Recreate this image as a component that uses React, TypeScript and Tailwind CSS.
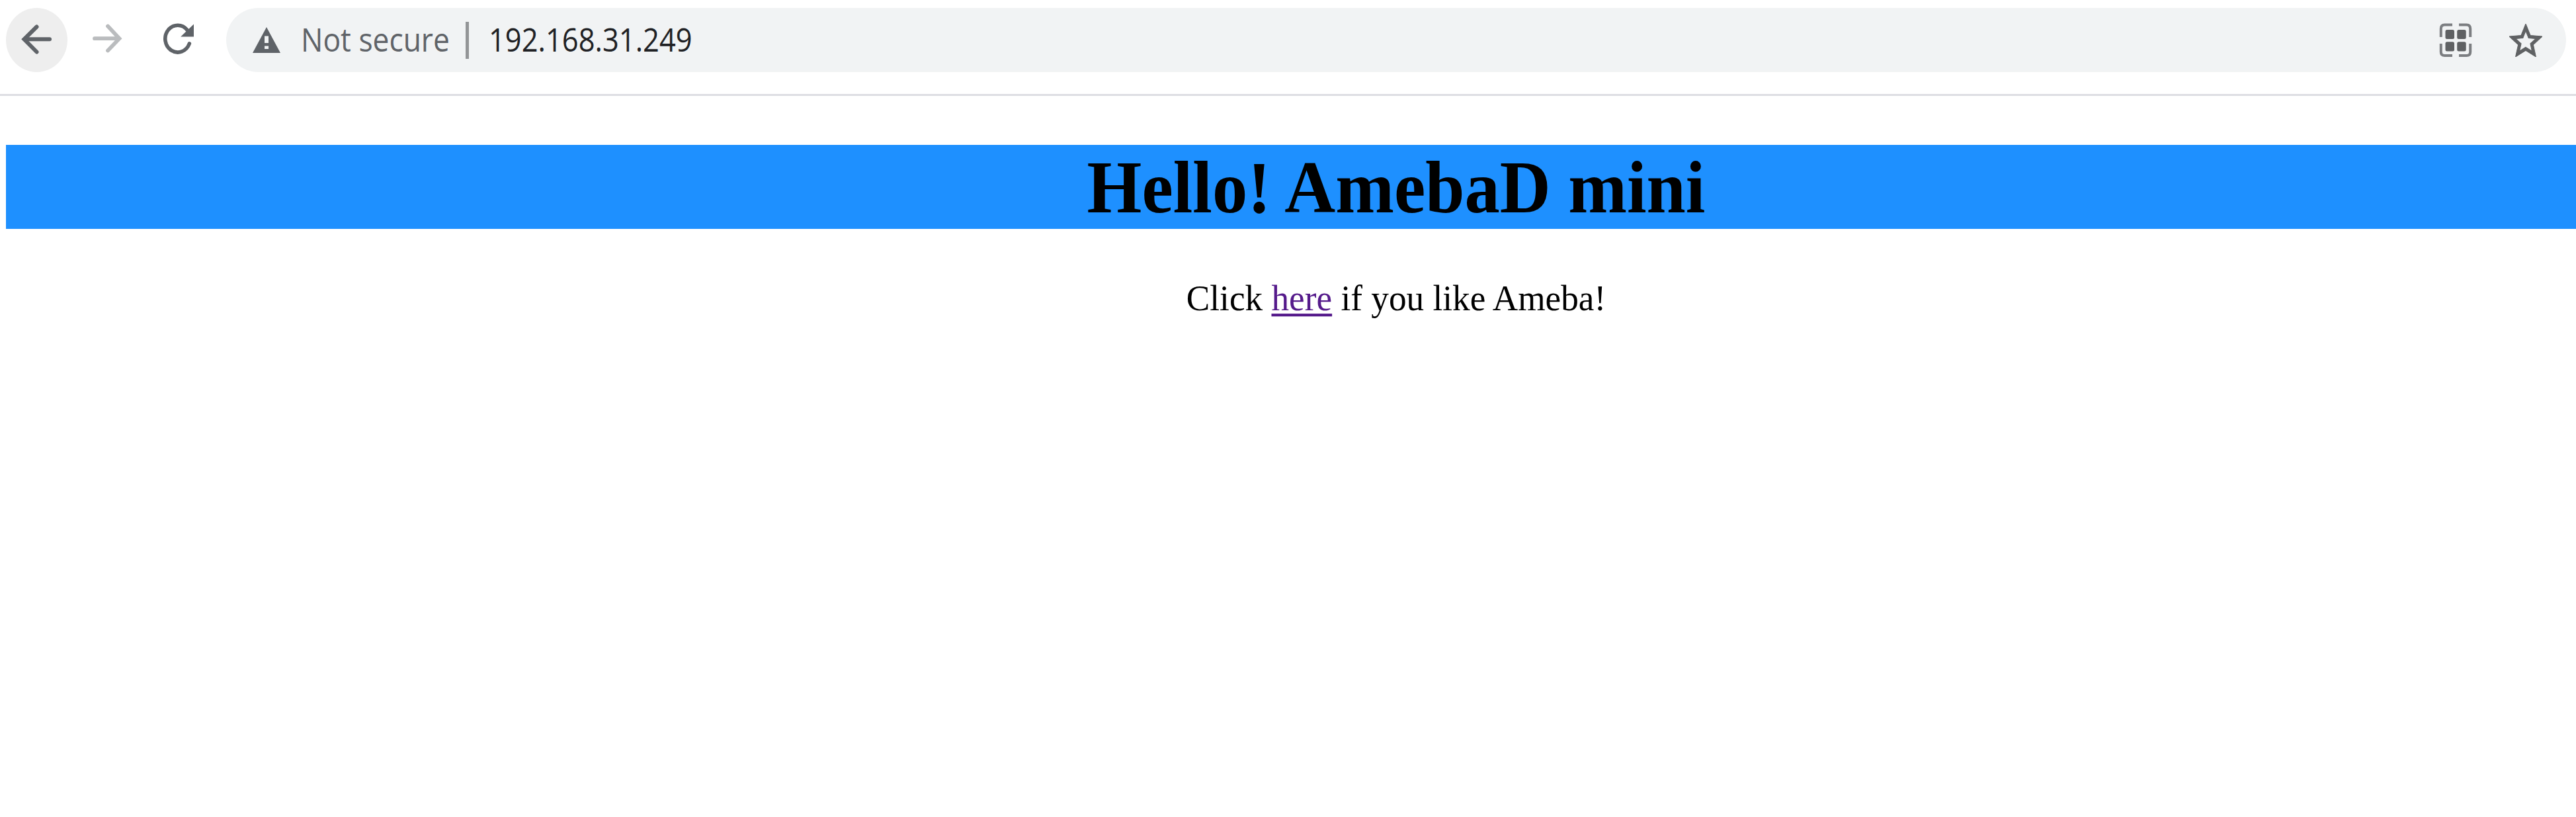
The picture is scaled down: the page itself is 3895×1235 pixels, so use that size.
function BackIcon() {
  return (
    <svg viewBox="0 0 93 97" className="h-[97px] w-[93px]" fill="none" stroke="#5f6368">
      <path d="M46.5 28.5 27.5 47.3 46.5 66.5" strokeWidth="6" strokeLinecap="round" />
      <path d="M28 47.3H66" strokeWidth="6" strokeLinecap="round" />
    </svg>
  );
}

function ForwardIcon() {
  return (
    <svg viewBox="0 0 50 50" className="h-[50px] w-[50px]" fill="none" stroke="#babcbe">
      <path d="M26 6.5 43.5 25.2 26 43.5M6 25.2H42.5" strokeWidth="5.8" strokeLinecap="round" />
    </svg>
  );
}

function ReloadIcon() {
  return (
    <svg viewBox="0 0 50 50" className="h-[50px] w-[50px]">
      <path
        d="M41.35 31.9A18.9 20.4 0 1 1 38.2 11.5"
        fill="none"
        stroke="#5f6368"
        strokeWidth="5.6"
        strokeLinecap="round"
      />
      <path d="M48 2.4V21.4H28.2Z" fill="#5f6368" />
    </svg>
  );
}

function WarningIcon() {
  return (
    <svg viewBox="0 0 42 39" className="h-[39px] w-[42px]">
      <path d="M21 0 42 39H0Z" fill="#5f6368" />
      <path d="M18 13.5h6V24h-6zM18 28.5h6V33h-6z" fill="#f1f3f4" />
    </svg>
  );
}

function GridIcon() {
  return (
    <svg viewBox="0 0 50 52" className="h-[52px] w-[50px]">
      <path
        d="M20 2.5H8.5Q2.8 2.5 2.8 8.5V21M30 2.5H41.5Q47.2 2.5 47.2 8.5V21M20 49H8.5Q2.8 49 2.8 43.5V31M30 49H41.5Q47.2 49 47.2 43.5V31"
        fill="none"
        stroke="#7c7e81"
        strokeWidth="4"
      />
      <g fill="#5f6163">
        <rect x="9.5" y="10" width="13.5" height="14" rx="2.5" />
        <rect x="27.2" y="10" width="13.5" height="14" rx="2.5" />
        <rect x="9.5" y="28.3" width="13.5" height="14.2" rx="2.5" />
        <rect x="27.2" y="28.3" width="13.5" height="14.2" rx="2.5" />
      </g>
    </svg>
  );
}

function StarIcon() {
  return (
    <svg viewBox="2 2 20 19" preserveAspectRatio="none" className="h-[50px] w-[50px]" fill="#5f6163">
      <path
        d="m22 9.24-7.19-.62L12 2 9.19 8.63 2 9.24l5.46 4.73L5.82 21 12 17.27 18.18 21l-1.63-7.03L22 9.24zM12 15.4l-3.76 2.27 1-4.28-3.32-2.88 4.38-.38L12 6.1l1.71 4.04 4.38.38-3.32 2.88 1 4.28L12 15.4z"
        stroke="#5f6163"
        strokeWidth="0.4"
      />
    </svg>
  );
}

export default function App() {
  return (
    <div className="h-[1235px] w-[3895px] overflow-hidden bg-white">
      <header className="flex h-[145px] items-start border-b-[3px] border-[#dddee3] pt-3 pl-[9px]">
        <button className="h-[97px] w-[93px] rounded-[50%] bg-[#eeeeee]" aria-label="Back">
          <BackIcon />
        </button>
        <button className="mt-[21px] ml-[35px]" aria-label="Forward">
          <ForwardIcon />
        </button>
        <button className="mt-[22px] ml-[58px]" aria-label="Reload">
          <ReloadIcon />
        </button>
        <div className="ml-[47px] flex h-[97px] w-[3538px] items-center rounded-full bg-[#f1f3f4] pr-[36px] pl-10 font-['Open_Sans',sans-serif] text-[49px] leading-none whitespace-nowrap">
          <WarningIcon />
          <span className="ml-[31px] w-[249px] origin-left scale-x-[0.905] pb-0.5 text-[#5f6368]">Not secure</span>
          <span className="h-14 w-[5px] bg-[#939597]" />
          <span className="ml-[30px] origin-left scale-x-[0.887] pb-0.5 text-[#202124]">192.168.31.249</span>
          <div className="ml-auto flex items-center gap-[56px]">
            <GridIcon />
            <StarIcon />
          </div>
        </div>
      </header>
      <main className="ml-[9px] w-[4204px] pt-[74px] text-center font-['Liberation_Serif',serif] text-black">
        <h1 className="h-[127px] bg-[#1e90ff] text-[106.5px] leading-[128px] font-bold">
          <span className="inline-block scale-y-[1.055]">Hello! AmebaD mini</span>
        </h1>
        <p className="mt-[73px] text-[53.25px] leading-[64px]">
          <span className="inline-block scale-y-[1.05]">
            Click{" "}
            <a href="#" className="text-[#551a8b] underline decoration-[4px] underline-offset-[5px]">
              here
            </a>{" "}
            if you like Ameba!
          </span>
        </p>
      </main>
    </div>
  );
}
